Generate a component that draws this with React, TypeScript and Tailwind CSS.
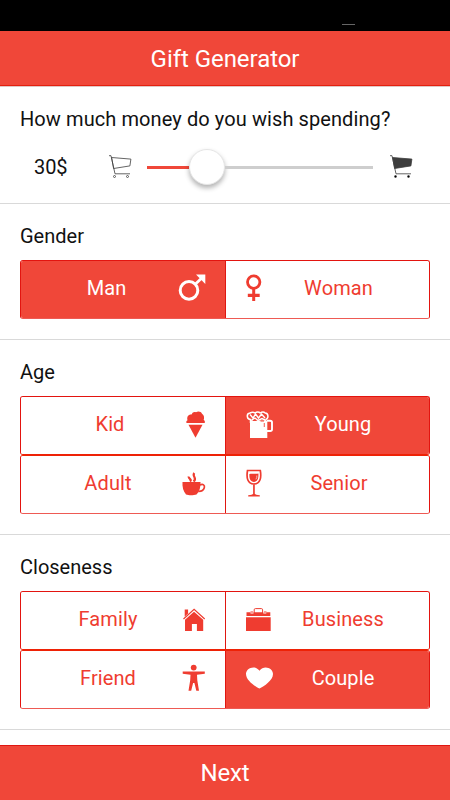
import type { ReactNode } from 'react'
import clsx from 'clsx'

type Option = { label: string; icon: ReactNode; active?: boolean; shift?: string }

const icons = {
  man: (
    <>
      <circle cx="15" cy="20.4" r="8.8" fill="none" stroke="currentColor" strokeWidth="3" />
      <path d="M21 14.4 28 7.700" stroke="currentColor" strokeWidth="2.8" />
      <path d="M22 4.500h9.300v9.400z" />
    </>
  ),
  woman: (
    <>
      <circle cx="17.7" cy="12.1" r="6.2" fill="none" stroke="currentColor" strokeWidth="2.8" />
      <path d="M16.200 18.300h3v5.500h4.500v3.200h-4.500v4h-3v-4h-4.400v-3.200h4.400z" />
    </>
  ),
  kid: (
    <>
      <path d="M12.500 17c-.5-1.500 0-2.300 1-2.800-1-3.500 1-6 4-5.700C18.500 6 20.500 5.500 22 6.300c2-1.300 5.200-.8 6 1.500 2.200 1.200 2.500 4 1.700 6.300 1.200.6 1.500 1.700 1 2.900z" />
      <path d="M14.500 18.800h14l-7 13z" />
    </>
  ),
  young: (
    <>
      <path d="M14 14.500h17.300v17.500H14z" />
      <path d="M31 14.700h3.200q1.800 0 1.800 1.800v6.700q0 1.800-1.800 1.800H31" fill="none" stroke="currentColor" strokeWidth="1.9" />
      <path
        d="M14.500 17v-3.500c-3.800 0-4.500-6-.5-6.500 2-1.200 3.700-1 5 0 1.500-1.200 4-1.200 5.200 0 1.700-1.200 4-1 5 0 3.500.2 3.700 5.800.3 6.500"
        fill="none"
        stroke="currentColor"
        strokeWidth="1.500"
      />
      <path d="m14 8.500 3 3.500 2.500-4 3 4 3-4 3.500 4M15 14.500l4-2.500 3 2.500 4-2 4 2" fill="none" stroke="currentColor" strokeWidth="1.400" />
      <path d="M17 14h3.500v1H17zM24.500 14.500H28v1h-3.500zM27.800 17h.9v4h-.9z" fill="#f04739" />
    </>
  ),
  adult: (
    <>
      <path d="M8.500 17h18c.3 5-1 9.300-4 12.500-3 1-8 1-10.500 0-2.800-3.300-3.800-7.500-3.500-12.500z" />
      <path d="M26 20c3-1.500 5 .2 4.300 2.700-.6 2.200-2.700 3.700-6 3.600" fill="none" stroke="currentColor" strokeWidth="1.700" />
      <path d="M19.500 16.500c4.500-3.500-2-5 .8-8.500M16 16.500c2.500-2.200-1.800-2.500-1.300-5" fill="none" stroke="currentColor" strokeWidth="2.200" />
    </>
  ),
  senior: (
    <>
      <path d="M11.500 5.500h12.800c1.200 7 .2 13-6.400 13.500C11.300 18.500 10.300 12.500 11.500 5.500z" fill="none" stroke="currentColor" strokeWidth="1.700" />
      <path d="M13.400 9c3-.8 6 .3 9-.4.300 5-1 8-4.500 8.300-3.500-.3-4.800-3.200-4.500-7.900z" />
      <path d="M20.800 10.500q.3 2.500-.9 3.800" stroke="#fff" strokeWidth=".6" fill="none" />
      <path d="M17.100 19.500h1.700v9.300q.6 1 5 1.500v1.100H12.200v-1.100q4.300-.5 4.900-1.500z" />
    </>
  ),
  family: (
    <>
      <path d="M10.700 8.500h3.400v4l-3.400 3.200zM11 18.700l9-8 9.200 8V30h-6.300v-7h-5v7H11z" />
      <path d="m9.500 18 10.600-9.700L30.700 18" fill="none" stroke="currentColor" strokeWidth="1.200" />
    </>
  ),
  business: (
    <>
      <path d="M10 16.300h24.700V30H10z" />
      <path d="M10.500 11.300h4v1.300h3v-1.300h9.800v1.300h3v-1.300h4v3.800H10.500z" />
      <path d="M18.200 12V8.800q0-1.200 1.200-1.200h6q1.200 0 1.200 1.200V12M14.500 11h2.500M28 11h2.500" fill="none" stroke="currentColor" strokeWidth="1" />
    </>
  ),
  friend: (
    <>
      <circle cx="19.7" cy="7.6" r="2.9" />
      <path d="M8.700 11.600h22.100v2.100l-7.800 1 .3 5.500 1.700 10.500h-2.700L20.400 23h-1.300l-1.900 7.700h-2.700l1.700-10.500.3-5.500-7.800-1z" />
    </>
  ),
  couple: (
    <path d="M23.500 28.500C19 26.300 10 20.500 10 14 10 8 19 4.500 23.500 10.700 28 4.500 37 8 37 14 37 20.500 28 26.300 23.500 28.500z" />
  ),
}

function Cart({ filled = false }: { filled?: boolean }) {
  return (
    <svg width="24" height="24" viewBox="0 0 24 24" fill="none" stroke="#3d3d3d" strokeWidth="0.8">
      <path d="M1 .7h2L7 18.800h15" />
      <path d="m3.600 2.500 19.300 1.600-1 6.800L5.600 13.500z" fill={filled ? '#3d3d3d' : 'none'} />
      <circle cx="6.5" cy="21.5" r="1" fill={filled ? '#000' : 'none'} />
      <circle cx="19.5" cy="21.5" r="1" fill={filled ? '#000' : 'none'} />
    </svg>
  )
}

function Cell({ option, right }: { option: Option; right: boolean }) {
  return (
    <button
      className={clsx(
        'flex h-full items-center',
        right ? 'flex-row-reverse border-l border-[#df1711] pl-[10px] pr-[27px]' : 'pl-[19px] pr-[11px]',
        option.active ? 'bg-[#f04739] text-white' : 'bg-white text-[#ef3c30]',
      )}
    >
      <span className={clsx('flex-1 pb-[3px] text-center text-[20px] leading-6 tracking-[0.1px]', option.shift)}>
        {option.label}
      </span>
      <svg width="40" height="40" viewBox="0 0 40 40" fill="currentColor" className="shrink-0">
        {option.icon}
      </svg>
    </button>
  )
}

function Group({ title, rows, className }: { title: string; rows: Option[][]; className: string }) {
  return (
    <section className={clsx('border-b border-[#d9d9d9] px-5', className)}>
      <h2 className="h-14 pt-5 text-[20px] leading-6">{title}</h2>
      {rows.map((row, i) => (
        <div
          key={i}
          className={clsx(
            'grid h-[59px] grid-cols-[204px_204px] overflow-hidden rounded-[3px] border border-[#e3140f]',
            i > 0 && 'border-t-[#ee2206]',
            i === rows.length - 1 ? 'border-b-[#ee5a54]' : 'border-b-[#ee2206]',
          )}
        >
          {row.map((option, j) => (
            <Cell key={option.label} option={option} right={j === 1} />
          ))}
        </div>
      ))}
    </section>
  )
}

export default function App() {
  return (
    <div className="flex h-[800px] w-[450px] flex-col overflow-hidden bg-white font-[Roboto,sans-serif] text-[#111]">
      <div className="flex h-[31px] justify-end bg-black pr-[95px] pt-6">
        <div className="h-px w-[13px] bg-[#666]" />
      </div>
      <header className="flex h-[55px] items-center justify-center border-b border-[#e3200f] bg-[#f04739] pt-px text-white">
        <h1 className="text-[24px] tracking-[-0.05px]">Gift Generator</h1>
      </header>

      <section className="h-[118px] border-y border-t-[#e0c8c6] border-b-[#d9d9d9] px-5 pt-5">
        <h2 className="text-[20px] leading-6 tracking-[0.09px]">How much money do you wish spending?</h2>
        <div className="mt-[18px] flex h-9 items-center">
          <span className="w-[88px] pl-[14px] text-[20px] tracking-[-0.1px]">30$</span>
          <Cart />
          <div className="ml-[15px] flex h-9 w-[226px] items-center">
            <div className="h-[3px] w-[42px] bg-[#f04739]" />
            <div className="size-9 rounded-full border border-[#e6e6e6] bg-white shadow-[0_3px_5px_rgba(0,0,0,0.3)]" />
            <div className="h-[3px] flex-1 bg-[#cecece]" />
          </div>
          <div className="ml-4">
            <Cart filled />
          </div>
        </div>
      </section>

      <Group
        title="Gender"
        className="h-[136px]"
        rows={[[
          { label: 'Man', icon: icons.man, active: true, shift: 'pr-px' },
          { label: 'Woman', icon: icons.woman, shift: 'pr-px' },
        ]]}
      />
      <Group
        title="Age"
        className="h-[195px]"
        rows={[
          [
            { label: 'Kid', icon: icons.kid, shift: 'pl-1.5' },
            { label: 'Young', icon: icons.young, active: true, shift: 'pl-2' },
          ],
          [
            { label: 'Adult', icon: icons.adult, shift: 'pl-0.5' },
            { label: 'Senior', icon: icons.senior },
          ],
        ]}
      />
      <Group
        title="Closeness"
        className="h-[195px]"
        rows={[
          [
            { label: 'Family', icon: icons.family, shift: 'pl-0.5' },
            { label: 'Business', icon: icons.business, shift: 'pl-2' },
          ],
          [
            { label: 'Friend', icon: icons.friend, shift: 'pl-0.5' },
            { label: 'Couple', icon: icons.couple, active: true, shift: 'pl-2' },
          ],
        ]}
      />

      <button className="mt-auto h-[55px] border-t border-[#df1711] bg-[#f04739] text-[24px] tracking-[-0.2px] text-white">
        Next
      </button>
    </div>
  )
}
